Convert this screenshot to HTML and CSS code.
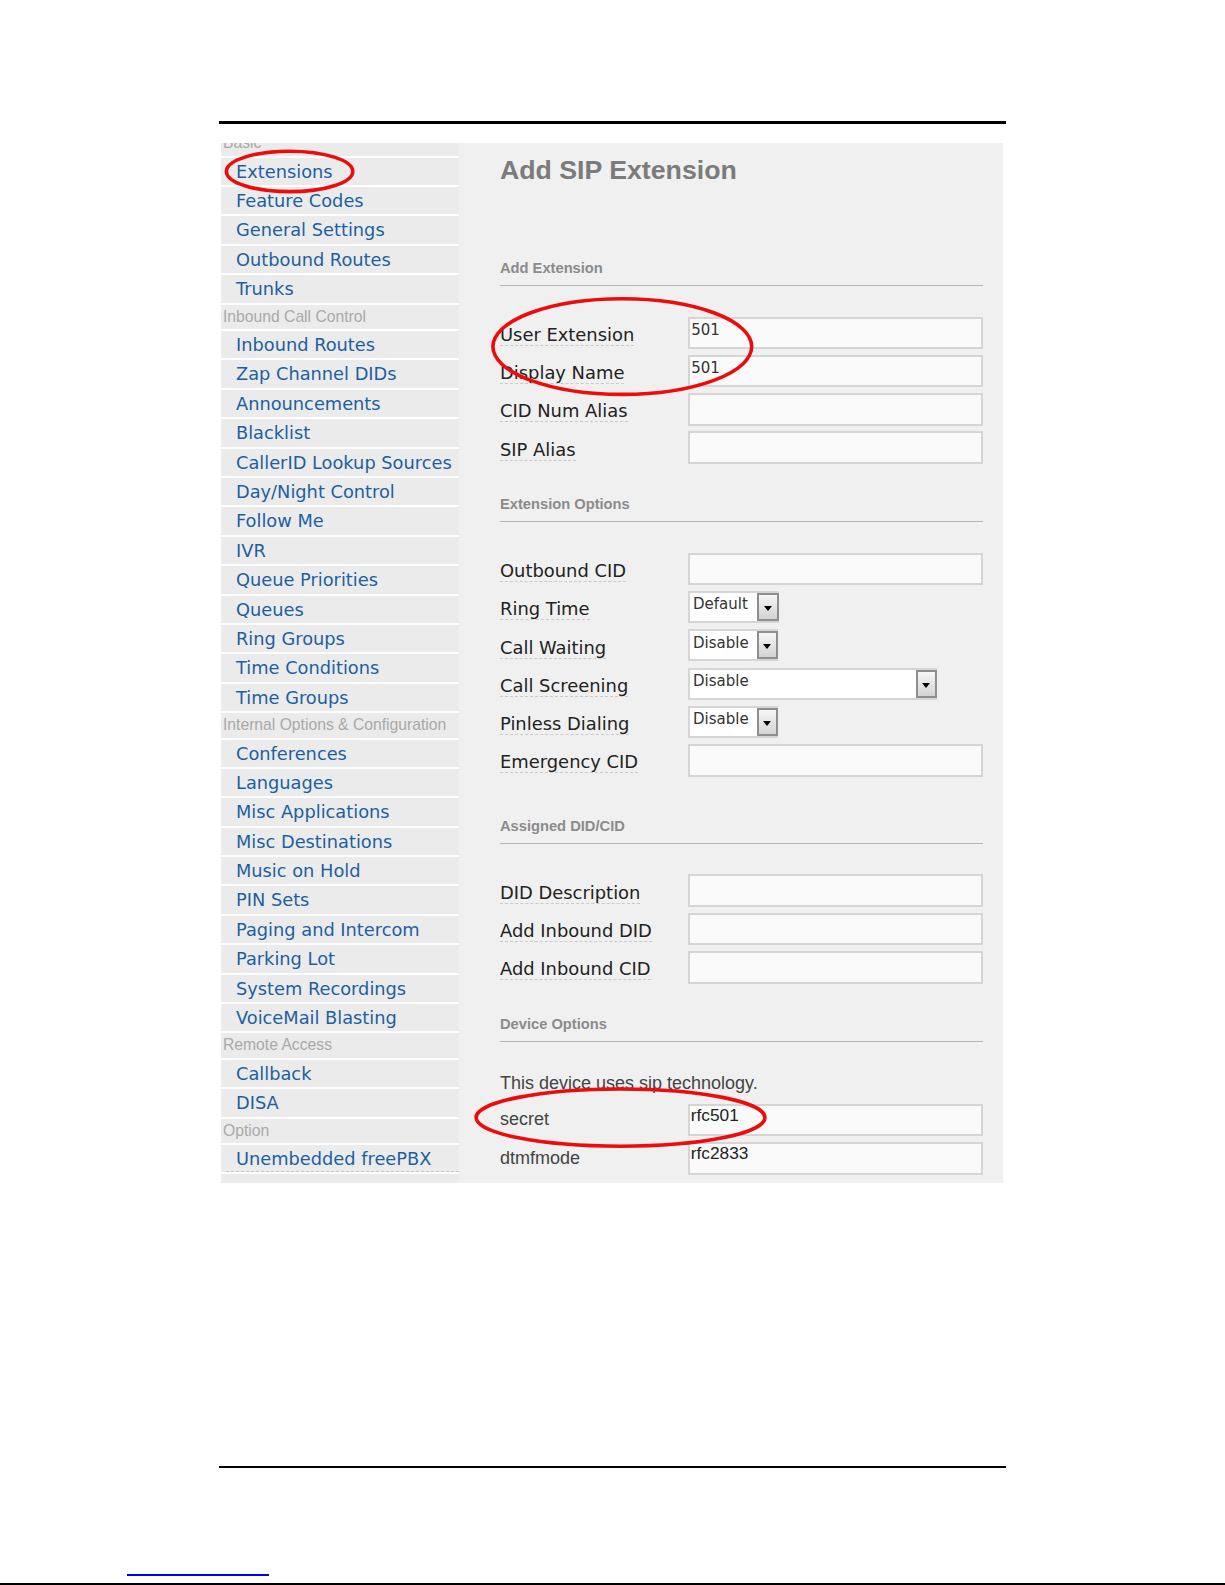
FILE: index.html
```html
<!DOCTYPE html>
<html lang="en">
<head>
<meta charset="UTF-8">
<meta name="viewport" content="width=device-width, initial-scale=1.0">
<title>Add SIP Extension</title>
<link rel="stylesheet" href="styles.css">
</head>
<body>

<div class="page">
    <div class="rule"></div>

    <div class="shot">
        <nav class="menu">
            <h3 class="first">Basic</h3>
            <a href="#">Extensions</a>
            <a href="#">Feature Codes</a>
            <a href="#">General Settings</a>
            <a href="#">Outbound Routes</a>
            <a href="#">Trunks</a>
            <h3>Inbound Call Control</h3>
            <a href="#">Inbound Routes</a>
            <a href="#">Zap Channel DIDs</a>
            <a href="#">Announcements</a>
            <a href="#">Blacklist</a>
            <a href="#">CallerID Lookup Sources</a>
            <a href="#">Day/Night Control</a>
            <a href="#">Follow Me</a>
            <a href="#">IVR</a>
            <a href="#">Queue Priorities</a>
            <a href="#">Queues</a>
            <a href="#">Ring Groups</a>
            <a href="#">Time Conditions</a>
            <a href="#">Time Groups</a>
            <h3>Internal Options &amp; Configuration</h3>
            <a href="#">Conferences</a>
            <a href="#">Languages</a>
            <a href="#">Misc Applications</a>
            <a href="#">Misc Destinations</a>
            <a href="#">Music on Hold</a>
            <a href="#">PIN Sets</a>
            <a href="#">Paging and Intercom</a>
            <a href="#">Parking Lot</a>
            <a href="#">System Recordings</a>
            <a href="#">VoiceMail Blasting</a>
            <h3>Remote Access</h3>
            <a href="#">Callback</a>
            <a href="#">DISA</a>
            <h3>Option</h3>
            <a href="#" class="external"><span>Unembedded freePBX</span></a>
        </nav>

        <main class="content">
            <h1>Add SIP Extension</h1>

            <section class="section">
                <h2>Add Extension</h2>
                <div class="row"><label><span>User Extension</span></label><input type="text" value="501"></div>
                <div class="row"><label><span>Display Name</span></label><input type="text" value="501"></div>
                <div class="row"><label><span>CID Num Alias</span></label><input type="text"></div>
                <div class="row"><label><span>SIP Alias</span></label><input type="text"></div>
            </section>

            <section class="section options">
                <h2>Extension Options</h2>
                <div class="row"><label><span>Outbound CID</span></label><input type="text"></div>
                <div class="row"><label><span>Ring Time</span></label>
                    <div class="select wide-text"><span>Default</span><b class="drop"></b></div>
                </div>
                <div class="row"><label><span>Call Waiting</span></label>
                    <div class="select"><span>Disable</span><b class="drop"></b></div>
                </div>
                <div class="row"><label><span>Call Screening</span></label>
                    <div class="select long"><span>Disable</span><b class="drop"></b></div>
                </div>
                <div class="row"><label><span>Pinless Dialing</span></label>
                    <div class="select"><span>Disable</span><b class="drop"></b></div>
                </div>
                <div class="row"><label><span>Emergency CID</span></label><input type="text"></div>
            </section>

            <section class="section">
                <h2>Assigned DID/CID</h2>
                <div class="row"><label><span>DID Description</span></label><input type="text"></div>
                <div class="row"><label><span>Add Inbound DID</span></label><input type="text"></div>
                <div class="row"><label><span>Add Inbound CID</span></label><input type="text"></div>
            </section>

            <section class="section device">
                <h2>Device Options</h2>
                <p class="note">This device uses sip technology.</p>
                <div class="row"><label>secret</label><input type="text" value="rfc501"></div>
                <div class="row"><label>dtmfmode</label><input type="text" value="rfc2833"></div>
            </section>
        </main>

        <!-- red pen circles drawn over the form -->
        <svg class="marks" viewBox="0 0 782 1040.5">
            <ellipse cx="68.6" cy="28.4" rx="63.2" ry="20.2"/>
            <ellipse cx="401.3" cy="203.6" rx="129.4" ry="47.8"/>
            <ellipse cx="399.5" cy="974.6" rx="144.4" ry="28.6"/>
        </svg>
    </div>

    <div class="rule foot"></div>
</div>

<div class="footnote-rule"></div>
<div class="edge"></div>

</body>
</html>
```

FILE: styles.css
```css
* { box-sizing: border-box; }
body {
    margin: 0;
    background: #fff;
    font-family: "DejaVu Sans", Verdana, sans-serif;
}
.page {
    width: 786.5px;
    margin-left: 219px;
    padding-top: 121px;
}
.rule {
    height: 3px;
    background: #000;
}
.rule.foot {
    margin-top: 282.7px;
    height: 2.5px;
}
.footnote-rule {
    width: 142px;
    height: 1.5px;
    margin: 106px 0 0 127px;
    background: #0000ff;
}
.edge {
    height: 1.7px;
    margin-top: 7.6px;
    background: #000;
}

/* the captured admin screen */
.shot {
    position: relative;
    display: flex;
    height: 1040.5px;
    margin: 18.5px 2.3px 0 1.7px;
    overflow: hidden;
}

/* left menu */
.menu {
    flex: none;
    width: 238.3px;
    background: #ebebeb;
    overflow: hidden;
}
.menu h3 {
    margin: 0;
    height: 26.4px;
    padding-left: 2.3px;
    line-height: 24.4px;
    border-bottom: 2px solid #fff;
    font: normal 15.7px/24.4px "Liberation Sans", Arial, sans-serif;
    color: #a9a9a9;
    white-space: nowrap;
}
.menu h3.first { margin-top: -11.2px; }
.menu a {
    display: block;
    height: 29.4px;
    padding-left: 15.3px;
    border-bottom: 2px solid #fff;
    font-size: 17.8px;
    line-height: 27.4px;
    color: #1d5fa3;
    text-decoration: none;
    white-space: nowrap;
}
.menu a.external {
    padding-left: 5px;
}
.menu a.external span {
    display: block;
    height: 27.4px;
    padding-left: 10.3px;
    border-bottom: 1px dashed #c8c8c8;
}

/* form area */
.content {
    flex: 1;
    background: #f0f0f0;
    padding: 12px 20px 0 41px;
}
h1 {
    margin: 0;
    font: bold 26.7px/31px "Liberation Sans", Arial, sans-serif;
    color: #7b7b7b;
}
.section { margin-top: 25.5px; }
h1 + .section { margin-top: 73.5px; }
.section.options { padding-bottom: 9px; }
.section h2 {
    margin: 0 0 30.5px;
    padding-bottom: 8px;
    border-bottom: 1.5px solid #b5b5b5;
    font: bold 14.7px/18px "Liberation Sans", Arial, sans-serif;
    color: #8b8b8b;
}
.row {
    display: flex;
    height: 38.3px;
}
.row label {
    flex: none;
    width: 188.3px;
    padding-top: 7.3px;
    font-size: 17.9px;
    color: #222;
}
.row label span {
    display: inline-block;
    line-height: 21px;
    border-bottom: 1px dashed #cacaca;
}
.row input {
    width: 295px;
    height: 32.5px;
    margin: 0;
    padding: 2.4px 3px 8.6px 1px;
    border: 2px solid #d5d5d5;
    border-radius: 0;
    background: #fafafa;
    font: 15px/17.5px "DejaVu Sans", Verdana, sans-serif;
    color: #333;
    outline: none;
}

/* dropdowns */
.select {
    display: flex;
    width: 90px;
    height: 32px;
    border: 2px solid #d5d5d5;
    background: #fff;
}
.select.wide-text { width: 90.7px; }
.select.long { width: 249px; }
.select span {
    padding: 3.5px 0 0 2.7px;
    font-size: 15px;
    line-height: 17.5px;
    color: #333;
}
.drop {
    position: relative;
    flex: none;
    width: 21.7px;
    margin: 0 -2px 0 auto;
    border: 2px solid #8e8e8e;
    background: linear-gradient(#f7f7f7, #d3d3d3);
}
.drop::after {
    content: "";
    position: absolute;
    left: 4.3px;
    top: 11px;
    border-left: 4.4px solid transparent;
    border-right: 4.4px solid transparent;
    border-top: 5px solid #000;
}

/* device section uses the plain sans face */
.note {
    margin: 31.5px 0 9.5px;
    font: 18px/21px "Liberation Sans", Arial, sans-serif;
    color: #444;
}
.device .row label {
    padding-top: 5.5px;
    font: 18px/21px "Liberation Sans", Arial, sans-serif;
    color: #444;
}
.device .row input {
    padding: 0 3px 9.5px 0.5px;
    font: 17.3px/19px "Liberation Sans", Arial, sans-serif;
    color: #222;
}

.marks {
    position: absolute;
    left: 0;
    top: 0;
    width: 782px;
    height: 1040.5px;
    pointer-events: none;
}
.marks ellipse {
    fill: none;
    stroke: #ec0c0c;
    stroke-width: 3.6;
}
```
